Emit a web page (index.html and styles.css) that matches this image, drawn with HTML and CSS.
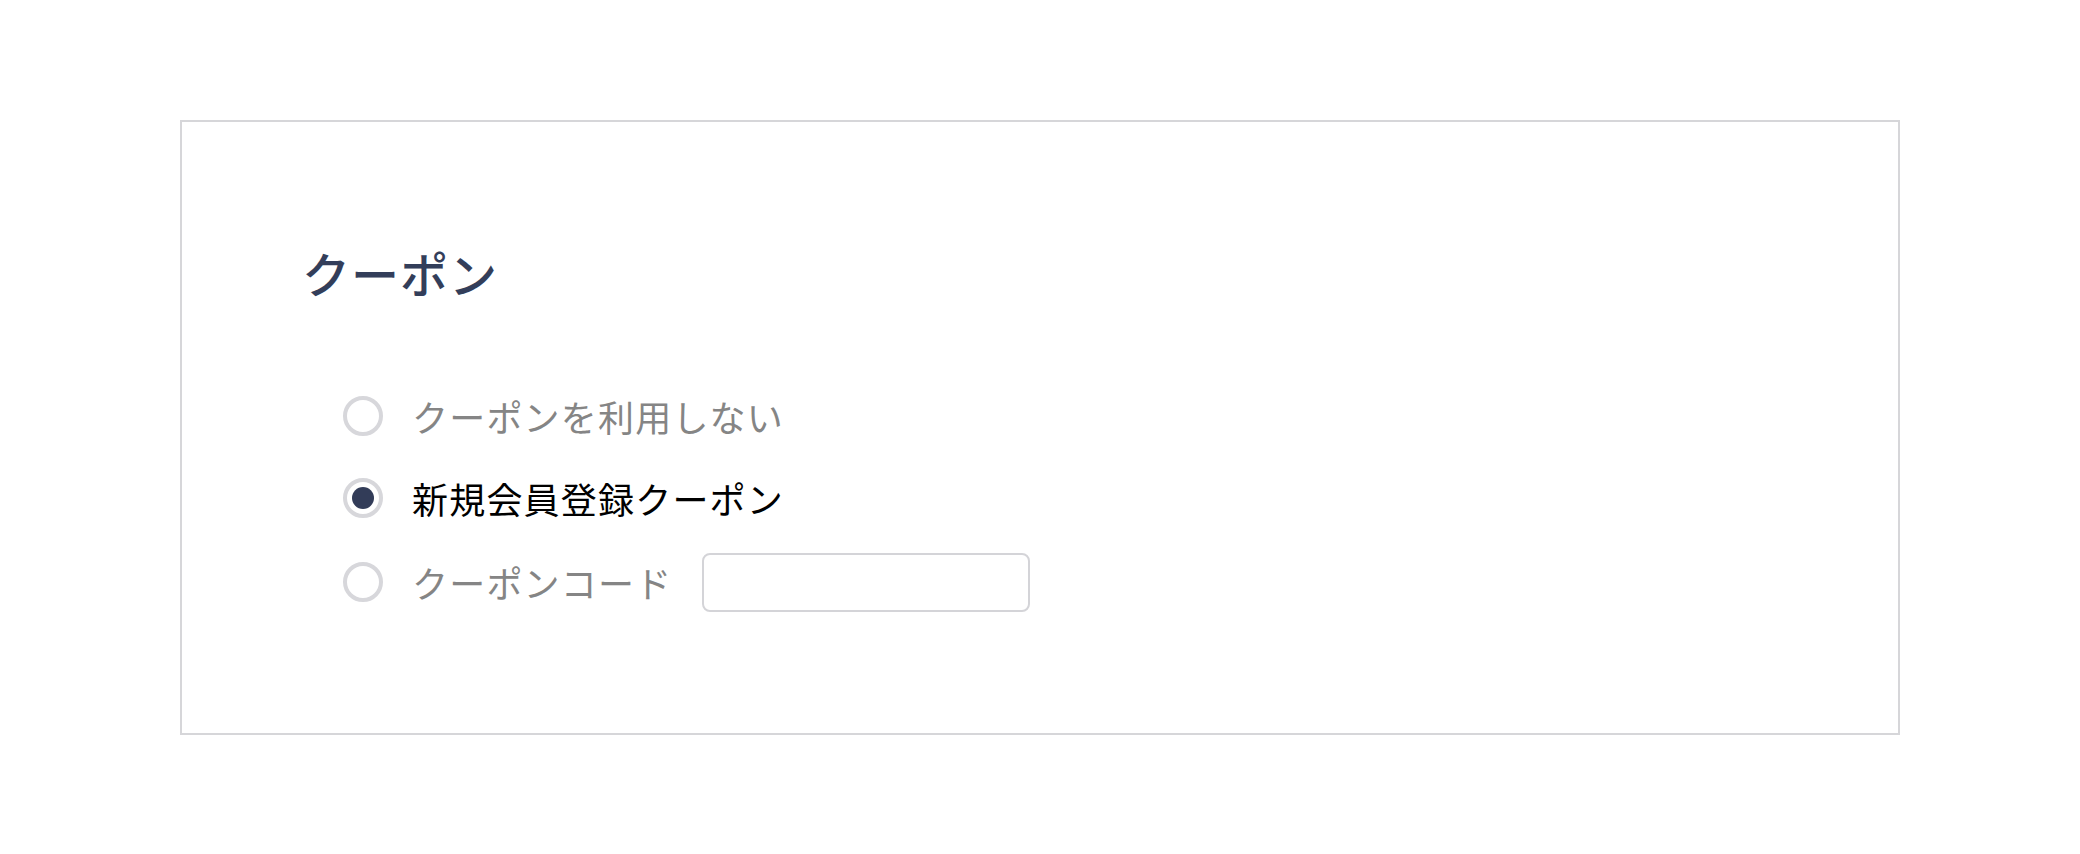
FILE: index.html
```html
<!DOCTYPE html>
<html lang="ja">
<head>
    <meta charset="UTF-8">
    <meta name="viewport" content="width=device-width, initial-scale=1.0">
    <title>クーポン</title>
    <link rel="stylesheet" href="styles.css">
</head>
<body>
    <section class="coupon-box">
        <h2 class="coupon-title">クーポン</h2>

        <div class="coupon-options">
            <label class="option">
                <input type="radio" name="coupon" value="none" class="option-radio">
                <span class="option-label">クーポンを利用しない</span>
            </label>
            <label class="option">
                <input type="radio" name="coupon" value="new-member" class="option-radio" checked>
                <span class="option-label">新規会員登録クーポン</span>
            </label>
            <label class="option option-code">
                <input type="radio" name="coupon" value="code" class="option-radio">
                <span class="option-label">クーポンコード</span>
                <input type="text" class="code-input">
            </label>
        </div>
    </section>
</body>
</html>
```

FILE: styles.css
```css
body {
    margin: 0;
    background: #fff;
    font-family: "Noto Sans CJK JP", "Noto Sans", sans-serif;
}
.coupon-box {
    width: 1720px;
    margin: 120px auto 0;
    padding: 114px 120px 121px 120px;
    border: 2px solid #d6d6d9;
    box-sizing: border-box;
}
.coupon-title {
    margin: 0;
    font-size: 48px;
    line-height: 72px;
    font-weight: 500;
    color: #333e5a;
    letter-spacing: 1px;
}
.coupon-options {
    display: flex;
    flex-direction: column;
    gap: 22px;
    margin-top: 78px;
    padding-left: 41px;
}
.option {
    display: flex;
    align-items: center;
    min-height: 60px;
    cursor: pointer;
}
.option-code {
    margin-top: 2px;
}
.option-radio {
    appearance: none;
    -webkit-appearance: none;
    width: 40px;
    height: 40px;
    margin: 0 29px 0 0;
    border: 4px solid #d7d7db;
    border-radius: 50%;
    box-sizing: border-box;
    background: #fff;
    display: flex;
    align-items: center;
    justify-content: center;
    flex-shrink: 0;
}
.option-radio:checked::after {
    content: "";
    width: 22px;
    height: 22px;
    border-radius: 50%;
    background: #323c58;
}
.option-label {
    font-size: 36px;
    line-height: 48px;
    letter-spacing: 1.2px;
    color: #858585;
}
.option-radio:checked + .option-label {
    color: #000;
}
.code-input {
    width: 328px;
    height: 59px;
    margin-left: 30px;
    border: 2px solid #d4d4d8;
    border-radius: 8px;
    box-sizing: border-box;
    font-size: 28px;
    padding: 0 12px;
}
```
